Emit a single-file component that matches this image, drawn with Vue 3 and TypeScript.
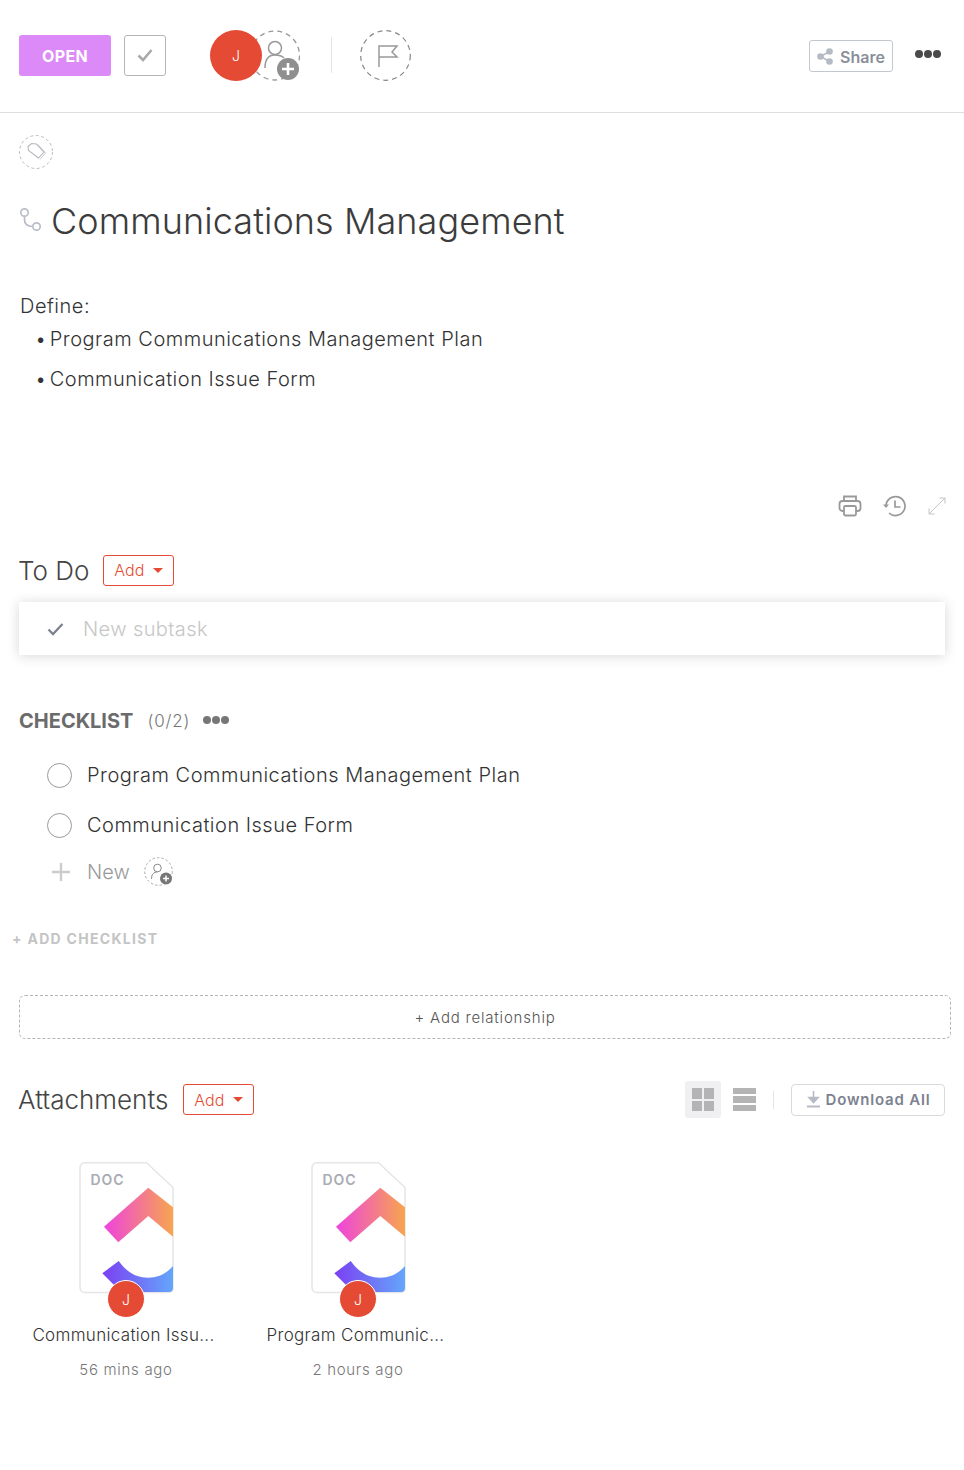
<script setup lang="ts">
const bullets = ['Program Communications Management Plan', 'Communication Issue Form']
const files = [
  { id: 'a', name: 'Communication Issu...', time: '56 mins ago' },
  { id: 'b', name: 'Program Communic...', time: '2 hours ago' },
]
</script>

<template>
  <div class="page">
    <header class="topbar">
      <button class="status">OPEN</button>
      <button class="done">
        <svg width="16" height="14" viewBox="0 0 16 14"><path d="M1.500 7.500l4.500 4.500 8.500-10" fill="none" stroke="#aaa" stroke-width="2.600" /></svg>
      </button>
      <div class="assignees">
        <span class="avatar big">J</span>
        <svg class="add-user" width="50" height="51" viewBox="0 0 50 51">
          <circle cx="25" cy="25.500" r="24.500" fill="none" stroke="#999" stroke-width="1.300" stroke-dasharray="5 4" />
          <circle cx="25" cy="18" r="6.500" fill="#fff" stroke="#999" stroke-width="1.500" />
          <path d="M15 38c0-8 3-13 10-13 4 0 7 1 9 3" fill="none" stroke="#999" stroke-width="1.500" />
          <circle cx="38" cy="39" r="11" fill="#8f8f8f" />
          <path d="M38 33v12M32 39h12" stroke="#fff" stroke-width="2.600" />
        </svg>
      </div>
      <span class="rule"></span>
      <svg class="flag" width="51" height="51" viewBox="0 0 51 51">
        <circle cx="25.500" cy="25.500" r="24.800" fill="none" stroke="#888" stroke-width="1.200" stroke-dasharray="5 4" />
        <path d="M19 37V16h18l-5 6 5 5H19" fill="none" stroke="#999" stroke-width="1.500" />
      </svg>
      <button class="share">
        <svg width="16" height="17" viewBox="0 0 16 17">
          <path d="M12.500 3.500L3.500 8.500l9 5" stroke="#b6bac2" stroke-width="1.500" fill="none" />
          <circle cx="12.500" cy="3.500" r="3.300" fill="#b6bac2" />
          <circle cx="3.500" cy="8.500" r="3.300" fill="#b6bac2" />
          <circle cx="12.500" cy="13.500" r="3.300" fill="#b6bac2" />
        </svg>
        Share
      </button>
      <span class="dots dark"><i></i><i></i><i></i></span>
    </header>

    <main class="body">
      <svg class="tag" width="34" height="34" viewBox="0 0 34 34">
        <circle cx="17" cy="17" r="16.500" fill="none" stroke="#bbb" stroke-dasharray="3 2.500" />
        <path d="M9 11.500l3.500-3 5 .5 7.500 8-5.500 6L9.500 15.500z" fill="none" stroke="#b5b8be" stroke-width="1.100" />
        <path d="M19 9.500l7.500 8.500-5.500 6.500" fill="none" stroke="#c8cad0" />
      </svg>

      <h1 class="title">
        <svg width="24" height="26" viewBox="0 0 24 26">
          <circle cx="5.500" cy="5.500" r="3.700" fill="none" stroke="#b9bdc7" stroke-width="1.700" />
          <circle cx="17.500" cy="19.500" r="3.700" fill="none" stroke="#b9bdc7" stroke-width="1.700" />
          <path d="M5.500 9.500v3c0 5 3 7 8 7" fill="none" stroke="#b9bdc7" stroke-width="1.700" />
        </svg>
        Communications Management
      </h1>

      <section class="description">
        <p>Define:</p>
        <ul>
          <li v-for="item in bullets" :key="item">{{ item }}</li>
        </ul>
      </section>

      <div class="tools">
        <svg width="24" height="22" viewBox="0 0 24 22" fill="none" stroke="#999" stroke-width="1.800">
          <path d="M6 6V1.500h12V6" />
          <rect x="1.500" y="6" width="21" height="10" rx="3" />
          <rect x="6" y="11" width="12" height="9.500" rx="1.500" fill="#fff" />
        </svg>
        <svg width="24" height="24" viewBox="0 0 24 24" fill="none" stroke="#999" stroke-width="1.700">
          <path d="M3 12a9.500 9.500 0 1 1 3 7" />
          <path d="M12 6.500V13h5.500" />
          <path d="M0 10.500h6l-3 3.500z" fill="#999" stroke="none" />
        </svg>
        <svg width="18" height="18" viewBox="0 0 18 18" fill="none" stroke="#c4c4c4" stroke-width="1">
          <path d="M1 17L17 1M11.500 1H17v5.500M1 11.500V17h5.500" />
        </svg>
      </div>

      <div class="heading todo-heading">
        <h2>To Do</h2>
        <button class="add">Add <b></b></button>
      </div>
      <div class="subtask">
        <svg width="17" height="14" viewBox="0 0 17 14"><path d="M1.500 7.500l4.500 4.500 9.500-10" fill="none" stroke="#7c828f" stroke-width="2.300" /></svg>
        <span>New subtask</span>
      </div>

      <div class="checklist-head">
        <strong>CHECKLIST</strong>
        <span class="count">(0/2)</span>
        <span class="dots"><i></i><i></i><i></i></span>
      </div>
      <div v-for="item in bullets" :key="item" class="check-row">
        <span class="circle"></span>
        <span>{{ item }}</span>
      </div>
      <div class="new-row">
        <svg width="18" height="18" viewBox="0 0 18 18"><path d="M9 0v18M0 9h18" stroke="#ccc" stroke-width="2.400" /></svg>
        <span>New</span>
        <svg width="30" height="30" viewBox="0 0 30 30">
          <circle cx="14.500" cy="14.500" r="13.800" fill="none" stroke="#aaa" stroke-dasharray="2.500 2" />
          <circle cx="13.500" cy="11" r="3.800" fill="none" stroke="#888" />
          <path d="M7.500 22c0-5 2.500-7 6-7" fill="none" stroke="#888" />
          <circle cx="22" cy="21.500" r="6" fill="#777" />
          <path d="M22 18.500v6M19 21.500h6" stroke="#fff" stroke-width="1.500" />
        </svg>
      </div>
      <div class="add-checklist">+ ADD CHECKLIST</div>

      <div class="relationship">+ Add relationship</div>

      <div class="heading attach-heading">
        <h2>Attachments</h2>
        <button class="add">Add <b></b></button>
        <div class="attach-tools">
          <span class="grid-toggle">
            <span class="grid-icon"><i></i><i></i><i></i><i></i></span>
          </span>
          <span class="list-icon"><i></i><i></i><i></i></span>
          <span class="rule small"></span>
          <button class="download">
            <svg width="15" height="17" viewBox="0 0 15 17">
              <path d="M7.500 0v10M3 6.500l4.500 5 4.500-5z" fill="#b6bac4" stroke="#b6bac4" stroke-width="1.600" />
              <path d="M1 15.500h13" stroke="#b6bac4" stroke-width="2" />
            </svg>
            Download All
          </button>
        </div>
      </div>

      <div class="files">
        <article v-for="file in files" :key="file.id" class="file">
          <div class="sheet-wrap">
            <svg class="sheet" width="95" height="132" viewBox="0 0 95 132">
              <defs>
                <linearGradient :id="'top-' + file.id" gradientUnits="userSpaceOnUse" x1="25" x2="94" y1="0" y2="0">
                  <stop offset="0" stop-color="#ee44dd" />
                  <stop offset="1" stop-color="#f7a54f" />
                </linearGradient>
                <linearGradient :id="'bottom-' + file.id" gradientUnits="userSpaceOnUse" x1="23" x2="94" y1="0" y2="0">
                  <stop offset="0" stop-color="#7b3ff2" />
                  <stop offset="1" stop-color="#64a6fb" />
                </linearGradient>
              </defs>
              <path d="M6 .750h61.500L94 25.500V126a4.500 4.500 0 0 1-4.500 4.500H6A5 5 0 0 1 1 125.500V5.750a5 5 0 0 1 5-5z" fill="#fff" stroke="#e6e6e6" stroke-width="1.500" />
              <path d="M25 64.700L69.300 25.700 94 45.300v29.400L69.300 54 39.300 80.300z" :fill="'url(#top-' + file.id + ')'" />
              <path d="M23.300 111.300L39.700 99c8 11 17 16.700 29.600 16.700 10 0 18-4 24.700-11.700v22a4 4 0 0 1-4 4H42z" :fill="'url(#bottom-' + file.id + ')'" />
            </svg>
            <span class="label">DOC</span>
            <span class="avatar small">J</span>
          </div>
          <div class="file-name">{{ file.name }}</div>
          <div class="file-time">{{ file.time }}</div>
        </article>
      </div>
    </main>
  </div>
</template>

<style scoped>
.page {
  width: 964px;
  height: 1470px;
  overflow: hidden;
  background: #fff;
  font-family: Inter, Lato, sans-serif;
  color: #444;
}

button {
  font-family: inherit;
  background: #fff;
  padding: 0;
}

.topbar {
  height: 113px;
  box-sizing: border-box;
  border-bottom: 1px solid #ddd;
  padding: 0 23px 2px 19px;
  display: flex;
  align-items: center;
}

.status {
  width: 92px;
  height: 41px;
  border: 0;
  border-radius: 3px;
  padding-top: 2px;
  background: #dc8af7;
  color: #fff;
  font-size: 16px;
  font-weight: 700;
  letter-spacing: .3px;
}

.done {
  width: 42px;
  height: 41px;
  margin-left: 13px;
  border: 1px solid #b5b5b5;
  border-radius: 3px;
  display: flex;
  align-items: center;
  justify-content: center;
}

.assignees {
  display: flex;
  margin-left: 44px;
}

.avatar {
  border-radius: 50%;
  background: #e54b34;
  color: #fff;
  font-weight: 300;
  display: flex;
  align-items: center;
  justify-content: center;
}

.avatar.big {
  width: 52px;
  height: 51px;
  font-size: 14px;
  position: relative;
  z-index: 1;
}

.add-user {
  margin-left: -12px;
}

.rule {
  width: 1px;
  height: 36px;
  background: #e6e6e6;
  margin-left: 31px;
}

.flag {
  margin-left: 28px;
}

.share {
  margin-left: auto;
  margin-top: 1px;
  width: 84px;
  height: 32px;
  padding-top: 2px;
  border: 1px solid #c3c7cf;
  border-radius: 3px;
  color: #8a8f9a;
  font-size: 16px;
  font-weight: 600;
  display: flex;
  align-items: center;
  justify-content: center;
  gap: 7px;
}

.dots {
  display: inline-flex;
  gap: 1px;
}

.dots i {
  width: 8px;
  height: 8px;
  border-radius: 50%;
  background: #777;
}

.dots.dark {
  margin-left: 22px;
  margin-top: -2px;
}

.dots.dark i {
  background: #4a4a4a;
}

.body {
  padding: 22px 19px 0;
}

.tag {
  display: block;
}

.title {
  margin: 30px 0 0;
  height: 44px;
  display: flex;
  align-items: center;
  gap: 8px;
  font-size: 36px;
  font-weight: 300;
  letter-spacing: .08px;
  color: #3c3c3c;
  white-space: nowrap;
}

.title svg {
  margin-top: -2px;
}

.description {
  margin-top: 50px;
  padding-left: 1px;
  font-size: 20px;
  font-weight: 300;
  letter-spacing: .5px;
  color: #333;
}

.description p {
  margin: 0;
  line-height: 26px;
}

.description ul {
  list-style: none;
  margin: 0;
  padding: 0 0 0 15px;
}

.description li {
  margin-top: 8px;
  line-height: 32px;
}

.description li::before {
  content: "•";
  margin-right: 3px;
}

.description li:first-child {
  margin-top: 4px;
}

.tools {
  margin-top: 99px;
  margin-right: -1px;
  height: 24px;
  display: flex;
  align-items: center;
  justify-content: flex-end;
  gap: 21px;
}

.heading {
  display: flex;
  align-items: center;
}

.heading h2 {
  margin: 0 0 0 -1px;
  font-size: 26px;
  font-weight: 300;
  color: #444;
}

.todo-heading {
  margin-top: 36px;
  height: 32px;
  gap: 14px;
}

.add {
  width: 71px;
  height: 31px;
  border: 1px solid #e54b34;
  border-radius: 3px;
  color: #e54b34;
  font-size: 16px;
  font-weight: 300;
  display: flex;
  align-items: center;
  justify-content: center;
  gap: 9px;
}

.add b {
  border: 5px solid transparent;
  border-top-color: #e54b34;
  border-bottom: 0;
}

.subtask {
  margin-top: 16px;
  width: 926px;
  height: 53px;
  padding-left: 28px;
  box-sizing: border-box;
  display: flex;
  align-items: center;
  gap: 19px;
  box-shadow: 0 1px 12px rgba(0, 0, 0, .16);
  color: #c6c6c6;
  font-size: 20px;
  font-weight: 300;
  letter-spacing: .4px;
}

.checklist-head {
  margin-top: 53px;
  height: 26px;
  display: flex;
  align-items: center;
  color: #6b6b6b;
}

.checklist-head strong {
  font-size: 20px;
  font-weight: 700;
}

.count {
  margin-left: 14px;
  font-size: 17px;
  font-weight: 300;
  letter-spacing: .8px;
  color: #777;
}

.checklist-head .dots {
  margin-left: 13px;
  margin-top: -3px;
}

.check-row {
  height: 50px;
  padding-left: 28px;
  display: flex;
  align-items: center;
  gap: 15px;
  font-size: 20px;
  font-weight: 300;
  letter-spacing: .5px;
  color: #333;
}

.checklist-head + .check-row {
  margin-top: 16px;
}

.circle {
  width: 25px;
  height: 25px;
  box-sizing: border-box;
  border: 1px solid #999;
  border-radius: 50%;
}

.new-row {
  height: 44px;
  padding-left: 33px;
  display: flex;
  align-items: center;
  font-size: 20px;
  font-weight: 300;
  color: #999;
}

.new-row span {
  margin: 0 14px 0 17px;
}

.add-checklist {
  margin: 33px 0 0 -7px;
  height: 24px;
  line-height: 24px;
  font-size: 14px;
  font-weight: 700;
  color: #c4c4c4;
  letter-spacing: 1.300px;
}

.relationship {
  margin-top: 44px;
  width: 932px;
  height: 44px;
  box-sizing: border-box;
  border: 1px dashed #b5b5b5;
  border-radius: 6px;
  display: flex;
  align-items: center;
  justify-content: center;
  font-size: 15px;
  font-weight: 300;
  letter-spacing: .8px;
  color: #555;
}

.attach-heading {
  margin-top: 42px;
  height: 37px;
  gap: 15px;
}

.attach-tools {
  margin-left: auto;
  display: flex;
  align-items: center;
}

.grid-toggle {
  width: 36px;
  height: 37px;
  border-radius: 3px;
  background: #f0f0f2;
  display: flex;
  align-items: center;
  justify-content: center;
}

.grid-icon {
  width: 22px;
  height: 23px;
  display: grid;
  grid-template-columns: 1fr 1fr;
  gap: 2px;
}

.grid-icon i,
.list-icon i {
  background: #b4b4b4;
}

.list-icon {
  width: 23px;
  height: 23px;
  margin-left: 12px;
  display: grid;
  gap: 2px;
}

.rule.small {
  height: 18px;
  margin-left: 17px;
}

.download {
  margin-left: 17px;
  width: 154px;
  height: 32px;
  border: 1px solid #d8dade;
  border-radius: 4px;
  color: #7c828f;
  font-size: 15px;
  font-weight: 600;
  letter-spacing: .8px;
  display: flex;
  align-items: center;
  justify-content: center;
  gap: 5px;
}

.files {
  margin-top: 44px;
  margin-left: 11px;
  display: flex;
  gap: 40px;
}

.file {
  width: 192px;
  display: flex;
  flex-direction: column;
  align-items: center;
}

.sheet-wrap {
  position: relative;
  width: 95px;
  height: 150px;
}

.sheet {
  display: block;
}

.label {
  position: absolute;
  left: 12px;
  top: 9px;
  font-size: 14px;
  font-weight: 600;
  letter-spacing: 1px;
  color: #a8abb3;
}

.avatar.small {
  position: absolute;
  left: 28.500px;
  top: 118px;
  width: 38px;
  height: 38px;
  box-sizing: border-box;
  border: 1.500px solid #fff;
  font-size: 14px;
}

.file-name {
  margin-top: 10px;
  padding-right: 5px;
  font-size: 17px;
  font-weight: 300;
  letter-spacing: .32px;
  line-height: 26px;
  color: #333;
  white-space: nowrap;
}

.file-time {
  margin-top: 10px;
  font-size: 15px;
  font-weight: 300;
  letter-spacing: .7px;
  line-height: 24px;
  color: #777;
}
</style>
